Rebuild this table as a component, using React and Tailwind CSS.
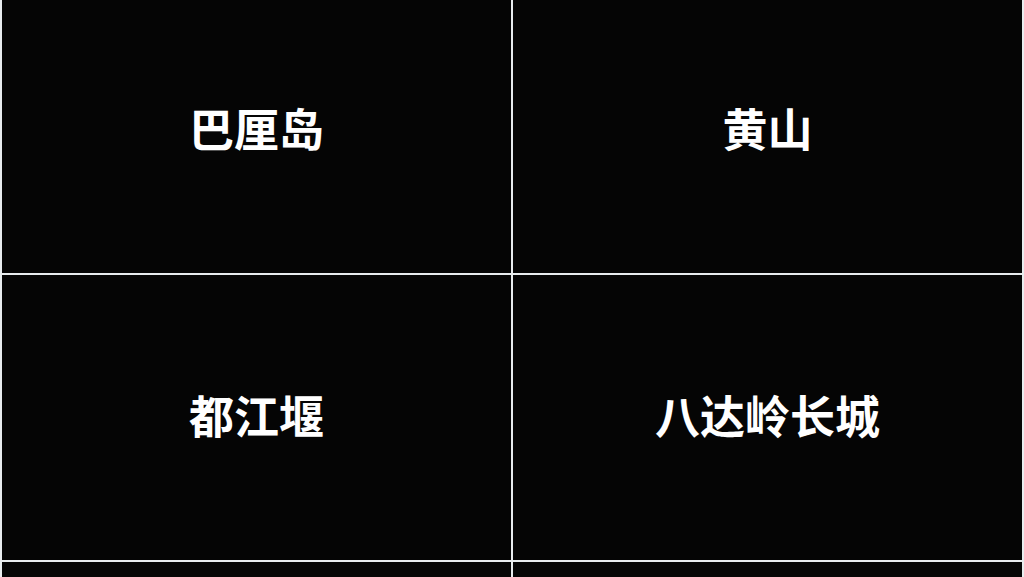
export default function App() {
  const items = ["巴厘岛", "黄山", "都江堰", "八达岭长城", "", ""];
  return (
    <div className="w-[1024px] h-[577px] overflow-hidden bg-[#e8ecee]">
      <div className="-mt-[12px] grid grid-cols-[509px_509px] auto-rows-[285px] gap-[2px] px-[2px] bg-[#e8ecee]">
        {items.map((t, i) => (
          <div
            key={i}
            className="bg-[#050505] flex items-center justify-center pb-[6px] text-white text-[45px] font-bold leading-none"
            style={{ fontFamily: '"Noto Sans CJK SC", "Noto Sans", sans-serif' }}
          >
            {t}
          </div>
        ))}
      </div>
    </div>
  );
}
